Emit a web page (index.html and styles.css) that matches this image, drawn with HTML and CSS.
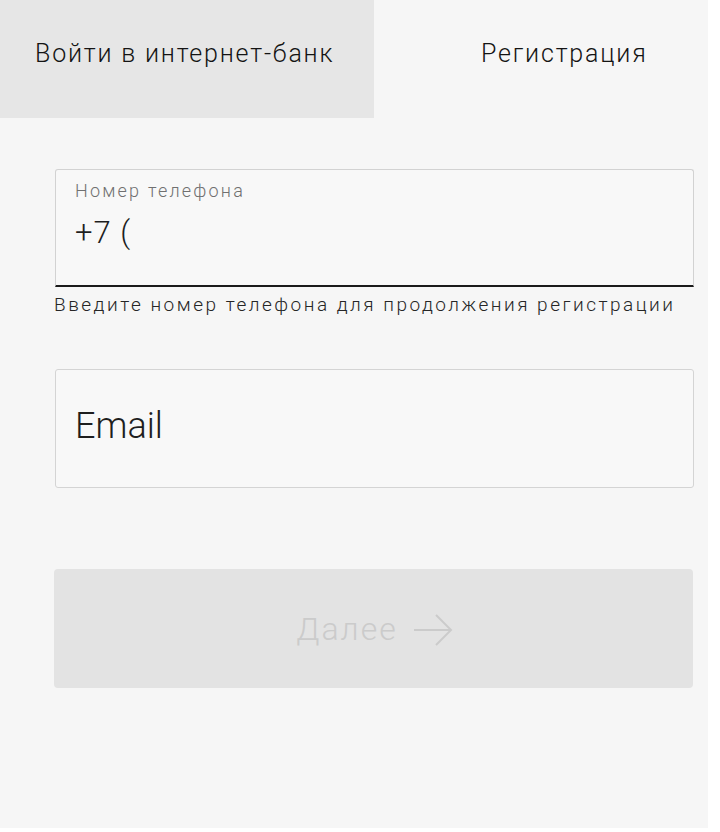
FILE: index.html
```html
<!DOCTYPE html>
<html lang="ru">
<head>
<meta charset="utf-8">
<title>Регистрация</title>
<link rel="stylesheet" href="styles.css">
</head>
<body>
<div class="panel">
  <nav class="tabs">
    <div class="tab tab-active">Войти в интернет-банк</div>
    <div class="tab tab-second">Регистрация</div>
  </nav>
  <form class="form">
    <div class="field field-phone">
      <span class="field-label">Номер телефона</span>
      <span class="field-value">+7 (</span>
    </div>
    <p class="hint">Введите номер телефона для продолжения регистрации</p>
    <div class="field field-email">
      <span class="field-placeholder">Email</span>
    </div>
    <button type="button" class="next-btn">
      <span>Далее</span>
      <svg class="arrow" width="40" height="34" viewBox="0 0 40 34" fill="none" stroke="currentColor" stroke-width="2">
        <path d="M1 17 H38"/>
        <path d="M23 2 L38 17 L23 32"/>
      </svg>
    </button>
  </form>
</div>
</body>
</html>
```
FILE: styles.css
```css
html, body {
  margin: 0;
  padding: 0;
  background: #ffffff;
}
body {
  font-family: Roboto, "Liberation Sans", sans-serif;
  color: #1e1e1e;
}
.panel {
  width: 708px;
  height: 828px;
  background: #f6f6f6;
}
.tabs {
  display: grid;
  grid-template-columns: 374px 1fr;
  height: 118px;
}
.tab {
  font-size: 25px;
  font-weight: 300;
  letter-spacing: 1.8px;
  line-height: 30px;
  padding-top: 39px;
  color: #141414;
}
.tab-active {
  background: #e6e6e6;
  padding-left: 35px;
}
.tab-second {
  padding-left: 107px;
}
.form {
  display: flex;
  flex-direction: column;
  padding-left: 54px;
  padding-top: 51px;
  width: 640px;
}
.field {
  box-sizing: border-box;
  background: #f8f8f8;
  margin-left: 1px;
  width: 639px;
}
.field-phone {
  height: 118px;
  border: 1px solid #d2d2d2;
  border-bottom: 2px solid #1a1a1a;
  border-radius: 3px 3px 0 0;
  padding: 9px 0 0 19px;
  display: flex;
  flex-direction: column;
}
.field-label {
  font-size: 18px;
  font-weight: 300;
  color: #707070;
  letter-spacing: 2.2px;
  line-height: 24px;
}
.field-value {
  font-size: 31px;
  font-weight: 300;
  letter-spacing: 1px;
  line-height: 36px;
  margin-top: 12px;
  color: #1e1e1e;
}
.hint {
  margin: 4px 0 0 0;
  font-size: 19px;
  font-weight: 300;
  letter-spacing: 2.5px;
  line-height: 28px;
  color: #262626;
  white-space: nowrap;
}
.field-email {
  margin-top: 50px;
  height: 119px;
  border: 1px solid #d4d4d4;
  border-radius: 3px;
  padding-left: 19px;
  display: flex;
  align-items: center;
}
.field-placeholder {
  font-size: 36px;
  font-weight: 300;
  color: #1e1e1e;
  margin-top: -5px;
}
.next-btn {
  margin-top: 81px;
  width: 639px;
  height: 119px;
  border: none;
  border-radius: 4px;
  background: #e3e3e3;
  color: #cbcbcb;
  font-family: Roboto, "Liberation Sans", sans-serif;
  font-size: 32px;
  font-weight: 300;
  letter-spacing: 2px;
  display: flex;
  align-items: center;
  justify-content: center;
  gap: 15px;
  padding: 0 0 0 2px;
}
.arrow {
  margin-top: 2px;
}
```
